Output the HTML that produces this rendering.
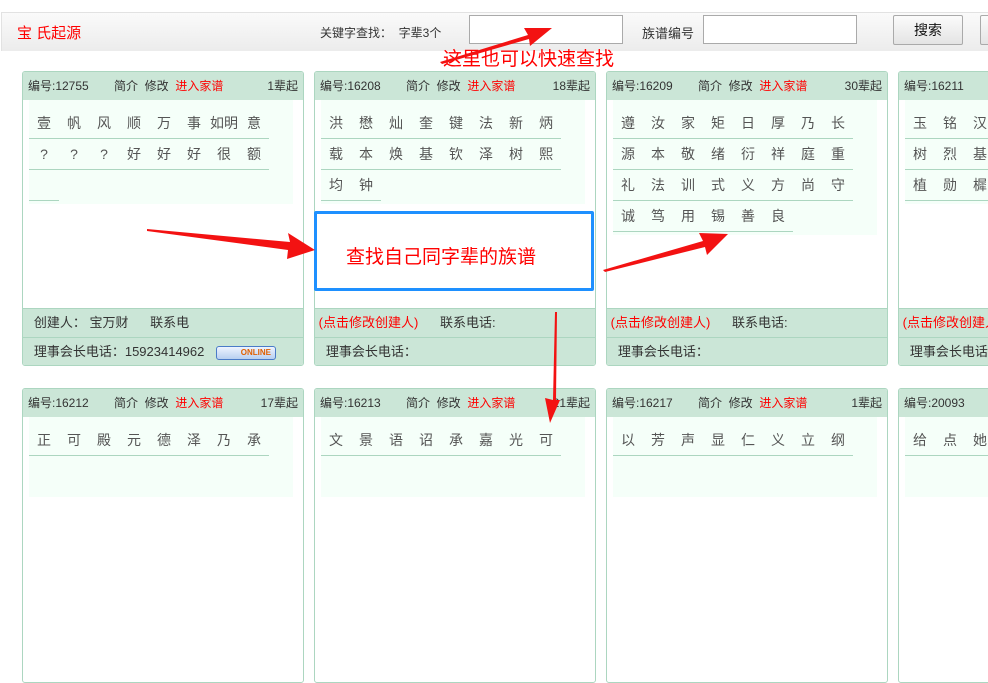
<!DOCTYPE html>
<html><head><meta charset="utf-8"><style>
*{margin:0;padding:0;box-sizing:border-box}
body{width:988px;height:463px;overflow:hidden;background:#fff;font-family:"Liberation Sans","Noto Sans CJK SC",sans-serif;font-size:12px;color:#333;position:relative}
.top{position:absolute;left:1px;top:12px;width:987px;height:39px;border-top:1px solid #e2e2e2;border-left:1px solid #e2e2e2;background:linear-gradient(#fafafa,#ececec)}
.abs{position:absolute;white-space:nowrap}
.inp{position:absolute;height:29px;border:1px solid #aaa;background:#fff}
.btn{position:absolute;height:30px;border:1px solid #aaa;border-radius:2px;background:linear-gradient(#fbfbfb,#e4e4e4);font-size:14px;color:#111;text-align:center;line-height:28px}
.card{position:absolute;width:282px;height:295px;border:1px solid #acd6c0;border-radius:3px;background:#fff;overflow:hidden}
.hd{position:absolute;left:0;top:0;width:100%;height:28px;background:#cbe6d7;font-size:12px;line-height:28px}
.hd span{position:absolute;top:0}
.mint{position:absolute;left:6px;top:28px;width:264px;background:#f5fff9}
.row{height:31px;margin-left:0;border-bottom:1px solid #acd6c0;font-size:14px;color:#555;line-height:30px;display:block;width:max-content}
.row i{font-style:normal;display:inline-block;width:30px;text-align:center}
.mint .rows{padding-top:8px}
.f1,.f2{position:absolute;left:0;width:100%;height:29px;background:#cbe6d7;border-top:1px solid #acd6c0;font-size:13px;line-height:28px}
.f1{top:236px}.f2{top:265px}
.red{color:#f00}
</style></head><body>
<div class="top"></div>
<div class="abs red" style="left:17px;top:22px;font-size:15px">宝 氏起源</div>
<div class="abs" style="left:320px;top:24px;font-size:12px">关键字查找：&nbsp; 字辈3个</div>
<div class="inp" style="left:469px;top:15px;width:154px"></div>
<div class="abs" style="left:642px;top:23px;font-size:13px">族谱编号</div>
<div class="inp" style="left:703px;top:15px;width:154px"></div>
<div class="btn" style="left:893px;top:15px;width:70px">搜索</div>
<div class="btn" style="left:980px;top:15px;width:20px"></div>
<div class="abs red" style="left:443px;top:44px;font-size:19px">这里也可以快速查找</div>

<!-- row 1 cards -->
<div class="card" style="left:22px;top:71px">
<div class="hd"><span style="left:5px">编号:12755</span><span style="left:91px">简介&nbsp; 修改&nbsp; <b class="red" style="font-weight:normal">进入家谱</b></span><span style="right:5px">1辈起</span></div>
<div class="mint" style="height:104px"><div class="rows">
<div class="row"><i>壹</i><i>帆</i><i>风</i><i>顺</i><i>万</i><i>事</i><i>如明</i><i>意</i></div>
<div class="row"><i>?</i><i>?</i><i>?</i><i>好</i><i>好</i><i>好</i><i>很</i><i>额</i></div>
<div class="row"><i></i></div></div></div>
<div class="f1">&nbsp;&nbsp;&nbsp;创建人： 宝万财&nbsp;&nbsp;&nbsp;&nbsp;&nbsp; 联系电</div>
<div class="f2">&nbsp;&nbsp;&nbsp;理事会长电话：15923414962 <span style="display:inline-block;vertical-align:middle;width:60px;height:14px;margin-left:8px;border:1px solid #4a7bc8;border-radius:3px;background:linear-gradient(#eef4ff,#b8cff0);font-size:8px;line-height:12px;color:#e06000;text-align:right;padding-right:4px;font-weight:bold">ONLINE</span></div>
</div>

<div class="card" style="left:314px;top:71px">
<div class="hd"><span style="left:5px">编号:16208</span><span style="left:91px">简介&nbsp; 修改&nbsp; <b class="red" style="font-weight:normal">进入家谱</b></span><span style="right:5px">18辈起</span></div>
<div class="mint" style="height:104px"><div class="rows">
<div class="row"><i>洪</i><i>懋</i><i>灿</i><i>奎</i><i>键</i><i>法</i><i>新</i><i>炳</i></div>
<div class="row"><i>载</i><i>本</i><i>焕</i><i>基</i><i>钦</i><i>泽</i><i>树</i><i>熙</i></div>
<div class="row"><i>均</i><i>钟</i></div></div></div>
<div class="f1">&nbsp;<span class="red">(点击修改创建人)</span>&nbsp;&nbsp;&nbsp;&nbsp;&nbsp; 联系电话:</div>
<div class="f2">&nbsp;&nbsp;&nbsp;理事会长电话：</div>
</div>

<div class="card" style="left:606px;top:71px">
<div class="hd"><span style="left:5px">编号:16209</span><span style="left:91px">简介&nbsp; 修改&nbsp; <b class="red" style="font-weight:normal">进入家谱</b></span><span style="right:5px">30辈起</span></div>
<div class="mint" style="height:135px"><div class="rows">
<div class="row"><i>遵</i><i>汝</i><i>家</i><i>矩</i><i>日</i><i>厚</i><i>乃</i><i>长</i></div>
<div class="row"><i>源</i><i>本</i><i>敬</i><i>绪</i><i>衍</i><i>祥</i><i>庭</i><i>重</i></div>
<div class="row"><i>礼</i><i>法</i><i>训</i><i>式</i><i>义</i><i>方</i><i>尚</i><i>守</i></div>
<div class="row"><i>诚</i><i>笃</i><i>用</i><i>锡</i><i>善</i><i>良</i></div></div></div>
<div class="f1">&nbsp;<span class="red">(点击修改创建人)</span>&nbsp;&nbsp;&nbsp;&nbsp;&nbsp; 联系电话:</div>
<div class="f2">&nbsp;&nbsp;&nbsp;理事会长电话：</div>
</div>

<div class="card" style="left:898px;top:71px">
<div class="hd"><span style="left:5px">编号:16211</span></div>
<div class="mint" style="height:104px"><div class="rows">
<div class="row"><i>玉</i><i>铭</i><i>汉</i><i></i></div>
<div class="row"><i>树</i><i>烈</i><i>基</i><i></i></div>
<div class="row"><i>植</i><i>勋</i><i>樨</i><i></i></div></div></div>
<div class="f1">&nbsp;<span class="red">(点击修改创建人)</span></div>
<div class="f2">&nbsp;&nbsp;&nbsp;理事会长电话：</div>
</div>

<!-- row 2 -->
<div class="card" style="left:22px;top:388px">
<div class="hd"><span style="left:5px">编号:16212</span><span style="left:91px">简介&nbsp; 修改&nbsp; <b class="red" style="font-weight:normal">进入家谱</b></span><span style="right:5px">17辈起</span></div>
<div class="mint" style="height:80px"><div class="rows"><div class="row"><i>正</i><i>可</i><i>殿</i><i>元</i><i>德</i><i>泽</i><i>乃</i><i>承</i></div></div></div>
</div>
<div class="card" style="left:314px;top:388px">
<div class="hd"><span style="left:5px">编号:16213</span><span style="left:91px">简介&nbsp; 修改&nbsp; <b class="red" style="font-weight:normal">进入家谱</b></span><span style="right:5px">21辈起</span></div>
<div class="mint" style="height:80px"><div class="rows"><div class="row"><i>文</i><i>景</i><i>语</i><i>诏</i><i>承</i><i>嘉</i><i>光</i><i>可</i></div></div></div>
</div>
<div class="card" style="left:606px;top:388px">
<div class="hd"><span style="left:5px">编号:16217</span><span style="left:91px">简介&nbsp; 修改&nbsp; <b class="red" style="font-weight:normal">进入家谱</b></span><span style="right:5px">1辈起</span></div>
<div class="mint" style="height:80px"><div class="rows"><div class="row"><i>以</i><i>芳</i><i>声</i><i>显</i><i>仁</i><i>义</i><i>立</i><i>纲</i></div></div></div>
</div>
<div class="card" style="left:898px;top:388px">
<div class="hd"><span style="left:5px">编号:20093</span></div>
<div class="mint" style="height:80px"><div class="rows"><div class="row"><i>给</i><i>点</i><i>她</i></div></div></div>
</div>

<!-- callout box -->
<div style="position:absolute;left:314px;top:211px;width:280px;height:80px;border:3px solid #1e90ff;border-radius:2px;background:#fff"></div>
<div class="abs red" style="left:346px;top:242px;font-size:19px">查找自己同字辈的族谱</div>

<!-- arrows -->
<svg style="position:absolute;left:0;top:0" width="988" height="463">
<g fill="#f31212">
<polygon points="440,62 528,35 524,28 552,28 530,46 529,39 442,64"/>
<polygon points="147,229 290,242 288,233 315,250 287,259 288,250 147,231"/>
<polygon points="603,270 703,241 699,233 728,234 707,255 705,247 605,272"/>
<polygon points="555,312 553,400 545,398 550,423 560,400 556,400 557,312"/>
</g>
</svg>
</body></html>
